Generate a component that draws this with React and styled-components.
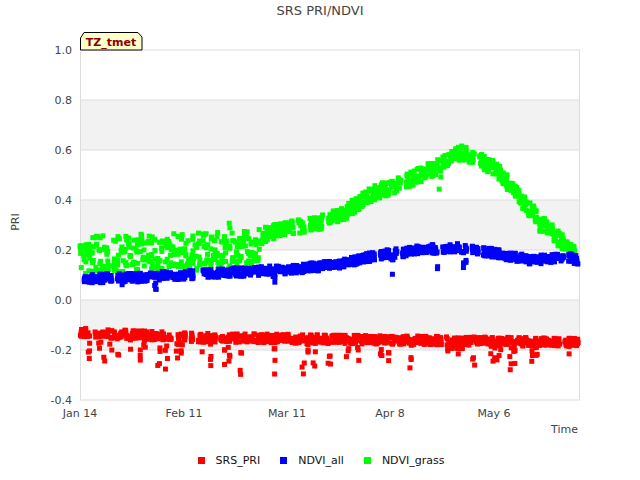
import React from "react";
import styled, { createGlobalStyle } from "styled-components";

const Global = createGlobalStyle`
  html, body { margin: 0; padding: 0; background: #fff; }
  body { font-family: "DejaVu Sans", sans-serif; }
`;

const Page = styled.div`
  width: 640px; height: 480px; display: flex; flex-direction: column; overflow: hidden;
`;
const Title = styled.div`
  height: 24px; line-height: 22px; text-align: center; font-size: 13px; color: #444;
`;
const Chart = styled.svg`
  display: block; width: 640px; height: 416px;
`;
const Legend = styled.div`
  flex: 1; display: flex; justify-content: center; align-items: center; gap: 20px;
  font-size: 11px; color: #111; padding-left: 2px;
`;
const Item = styled.div`
  display: flex; align-items: center; gap: 11px;
`;
const Swatch = styled.span`
  width: 7px; height: 7px; background: ${(p) => p.$c};
`;

function rng(seed) {
  return function () {
    seed |= 0; seed = (seed + 0x6d2b79f5) | 0;
    let t = Math.imul(seed ^ (seed >>> 15), 1 | seed);
    t = (t + Math.imul(t ^ (t >>> 7), 61 | t)) ^ t;
    return ((t ^ (t >>> 14)) >>> 0) / 4294967296;
  };
}
function interp(pts, x) {
  for (let i = 0; i < pts.length - 1; i++) {
    const [x0, y0] = pts[i], [x1, y1] = pts[i + 1];
    if (x >= x0 && x <= x1) return y0 + ((y1 - y0) * (x - x0)) / (x1 - x0);
  }
  return pts[pts.length - 1][1];
}
const Y = (v) => 50 + (1 - v) * 250 - 24;

const grassCurve = [[80,0.18],[250,0.2],[270,0.27],[320,0.31],[345,0.35],[370,0.42],[395,0.46],[420,0.5],[445,0.55],[462,0.59],[480,0.56],[500,0.51],[515,0.43],[530,0.36],[545,0.3],[560,0.24],[580,0.17]];
const allCurve = [[80,0.085],[140,0.09],[180,0.1],[230,0.11],[300,0.125],[340,0.145],[380,0.18],[420,0.2],[455,0.21],[490,0.19],[530,0.16],[570,0.17],[580,0.155]];

function makeSeries(seed, curve, spreadFn, dip) {
  const r = rng(seed); const out = [];
  for (let day = 0; day < 135; day++) {
    const x0 = 80 + day * 3.7;
    if (r() < 0.06) continue;
    const hasDip = r() < dip.p;
    const depth = dip.f(r);
    for (let k = 0; k < 7; k++) {
      const x = x0 + r() * 2.6;
      if (x > 579) break;
      let v = interp(curve, x) + (r() - 0.5) * spreadFn(x);
      if (hasDip && k % 2 === 0) v += depth * r();
      out.push([x, v]);
    }
  }
  return out;
}
const grass = makeSeries(3, grassCurve, (x) => (x < 260 ? 0.15 : 0.06), { p: 0.08, f: (r) => (r() - 0.5) * 0.18 });
const all = makeSeries(7, allCurve, () => 0.035, { p: 0.1, f: (r) => -r() * 0.09 });
const pri = makeSeries(11, [[80,-0.13],[200,-0.15],[580,-0.17]], () => 0.035, { p: 0.3, f: (r) => -0.04 - r() * 0.13 });

const Dots = ({ data, color }) => (
  <g fill={color}>
    {data.map(([x, v], i) => (
      <rect key={i} x={x - 2.5} y={Y(v) - 2.5} width="5" height="5" />
    ))}
  </g>
);

export default function App() {
  const ticks = [1, 0.8, 0.6, 0.4, 0.2, 0, -0.2, -0.4];
  const bands = [0.8, 0.4, 0];
  const xt = [[80, "Jan 14"], [184, "Feb 11"], [287, "Mar 11"], [390, "Apr 8"], [494, "May 6"]];
  return (
    <Page>
      <Global />
      <Title>SRS PRI/NDVI</Title>
      <Chart viewBox="0 24 640 416">
        <g transform="translate(0,24)">
          <rect x="80" y="26" width="500" height="350" fill="#fff" />
          {bands.map((b) => (
            <rect key={b} x="80" y={Y(b)} width="500" height="50" fill="#f2f2f2" />
          ))}
          {ticks.map((t) => (
            <g key={t}>
              <line x1="80" x2="580" y1={Y(t)} y2={Y(t)} stroke="#ddd" />
              <text x="72" y={Y(t) + 4} textAnchor="end" fontSize="11" fill="#444">
                {t.toFixed(1)}
              </text>
            </g>
          ))}
          <line x1="80.5" x2="80.5" y1="26" y2="376" stroke="#ddd" />
          <line x1="579.5" x2="579.5" y1="26" y2="376" stroke="#ddd" />
          {xt.map(([x, l]) => (
            <text key={l} x={x} y="393" textAnchor="middle" fontSize="11" fill="#444">{l}</text>
          ))}
          <Dots data={grass} color="#00ff00" />
          <Dots data={all} color="#0000ff" />
          <Dots data={pri} color="#ff0000" />
          <text x="578" y="409" textAnchor="end" fontSize="11" fill="#444">Time</text>
          <text transform="translate(19,198) rotate(-90)" textAnchor="middle" fontSize="11" fill="#444">PRI</text>
          <path d="M80.5 26 V14 L84 8.5 H138 L142 13 V26 Z" fill="#ffffcc" stroke="#000" />
          <text x="111" y="22" textAnchor="middle" fontSize="11" fontWeight="bold" fill="#8b0000">TZ_tmet</text>
        </g>
      </Chart>
      <Legend>
        <Item><Swatch $c="#f00" />SRS_PRI</Item>
        <Item><Swatch $c="#00f" />NDVI_all</Item>
        <Item><Swatch $c="#0f0" />NDVI_grass</Item>
      </Legend>
    </Page>
  );
}
